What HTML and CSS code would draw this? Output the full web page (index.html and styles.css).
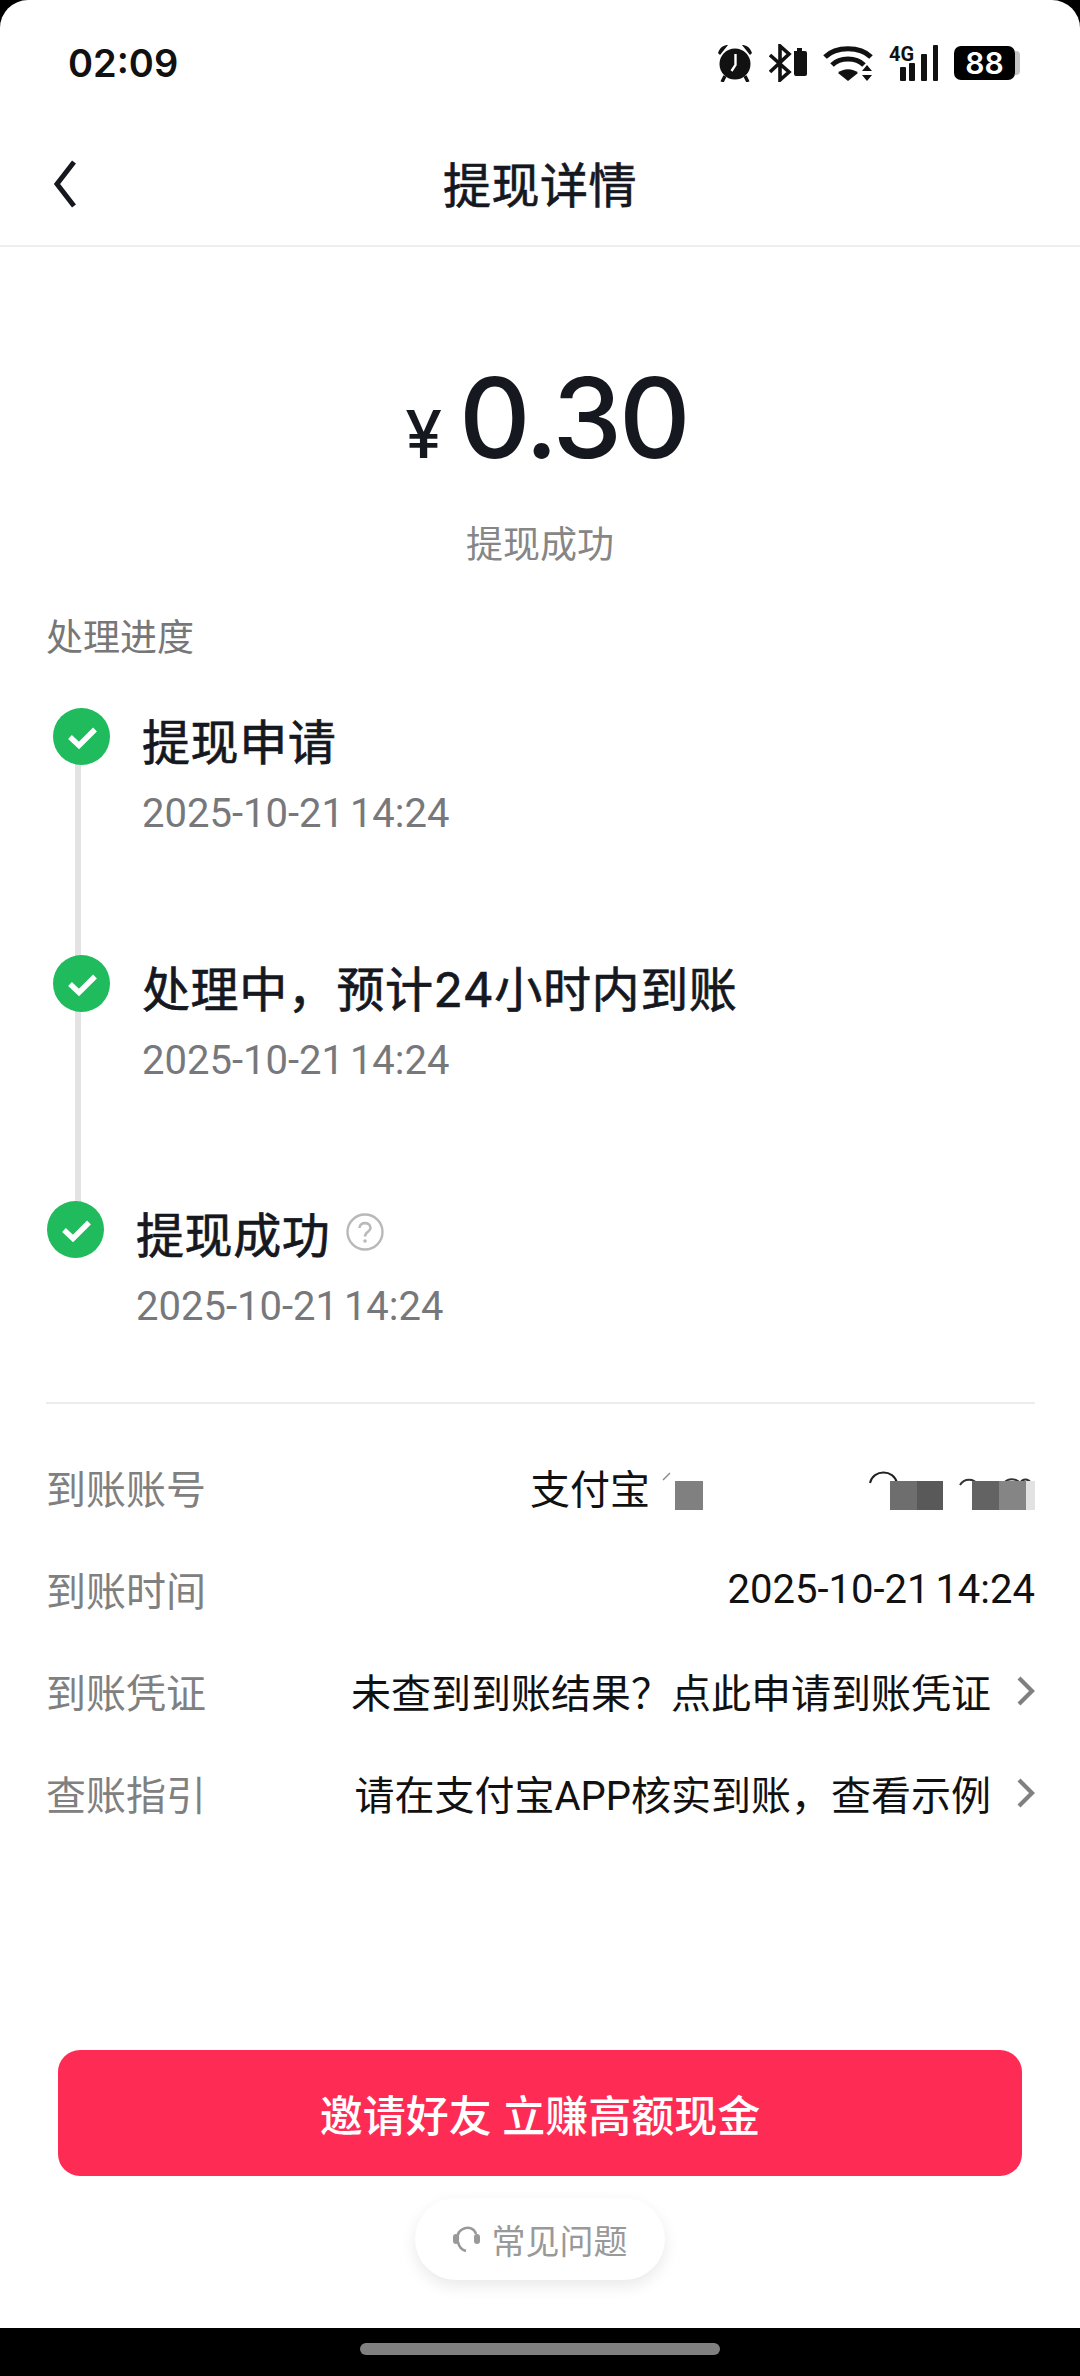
FILE: index.html
```html
<!DOCTYPE html>
<html lang="zh-CN">
<head>
    <meta charset="UTF-8">
    <meta name="viewport" content="width=device-width, initial-scale=1.0">
    <title>提现详情</title>
    <link rel="stylesheet" href="styles.css">
</head>
<body>
    <div class="screen">
        <!-- 状态栏 -->
        <div class="status-bar">
            <span class="status-time">02:09</span>
            <div class="status-icons">
                <svg width="36" height="38" viewBox="0 0 36 38">
                    <circle cx="18" cy="20" r="15.5"/>
                    <path d="M1 9 C3 3 7 1 11 1 L3 11 Z M35 9 C33 3 29 1 25 1 L33 11 Z"/>
                    <path d="M8 32 L5 38 M28 32 L31 38" stroke="#111" stroke-width="3.4" fill="none"/>
                    <path d="M18.5 10 V21 L14.5 27" stroke="#fff" stroke-width="2.4" fill="none"/>
                </svg>
                <svg width="38" height="38" viewBox="0 0 38 38">
                    <path d="M1 11 L20 28 L11 36 V2 L20 10 L1 28" stroke="#111" stroke-width="3.6" fill="none"/>
                    <path d="M25 7 H28 V4 H33 V7 H36 Q38 7 38 9 V30 Q38 32 36 32 H27 Q25 32 25 30 Z"/>
                </svg>
                <svg width="50" height="38" viewBox="0 0 50 38">
                    <path d="M2 13 C13 2 37 2 48 13" stroke="#111" stroke-width="5" fill="none"/>
                    <path d="M9 21 C17 13 33 13 41 21" stroke="#111" stroke-width="5" fill="none"/>
                    <path d="M15 29 C20 24 30 24 35 29 L25 37 Z"/>
                    <path d="M39 27 L44 21 L49 27 Z M39 31 H49 L44 37 Z"/>
                </svg>
                <svg class="icon-signal" width="49" height="46" viewBox="0 -4 49 46">
                    <text x="0" y="17" class="net-text">4G</text>
                    <rect x="11" y="23" width="6" height="14" rx="1"/>
                    <rect x="20" y="19" width="6" height="18" rx="1"/>
                    <rect x="32" y="10" width="6" height="27" rx="1"/>
                    <rect x="44" y="1" width="5" height="36" rx="1"/>
                </svg>
                <div class="battery">
                    <span class="battery-level">88</span>
                    <span class="battery-cap"></span>
                </div>
            </div>
        </div>

        <!-- 标题栏 -->
        <div class="nav-bar">
            <svg class="nav-back" width="34" height="50" viewBox="0 0 34 50">
                <path d="M27 3 L10 25 L27 47" stroke="#16181f" stroke-width="5" fill="none"/>
            </svg>
            <span class="nav-title">提现详情</span>
        </div>

        <!-- 金额 -->
        <div class="amount-box">
            <div class="amount"><span class="amount-unit">¥</span><span class="amount-num">0.30</span></div>
            <p class="amount-status">提现成功</p>
        </div>

        <p class="section-title">处理进度</p>

        <div class="steps">
            <div class="step">
                <div class="step-icon">
                    <svg width="57" height="57" viewBox="0 0 57 57"><circle cx="28.5" cy="28.5" r="28.5" fill="#1fbb5c"/><path d="M17 29 L26 37.5 L42 21.5" stroke="#fff" stroke-width="5.4" fill="none"/></svg>
                </div>
                <div class="step-text">
                    <p class="step-title">提现申请</p>
                    <p class="step-time">2025-10-21 14:24</p>
                </div>
            </div>
            <div class="step">
                <div class="step-icon">
                    <svg width="57" height="57" viewBox="0 0 57 57"><circle cx="28.5" cy="28.5" r="28.5" fill="#1fbb5c"/><path d="M17 29 L26 37.5 L42 21.5" stroke="#fff" stroke-width="5.4" fill="none"/></svg>
                </div>
                <div class="step-text">
                    <p class="step-title">处理中，预计24小时内到账</p>
                    <p class="step-time">2025-10-21 14:24</p>
                </div>
            </div>
            <div class="step step-last">
                <div class="step-icon">
                    <svg width="57" height="57" viewBox="0 0 57 57"><circle cx="28.5" cy="28.5" r="28.5" fill="#1fbb5c"/><path d="M17 29 L26 37.5 L42 21.5" stroke="#fff" stroke-width="5.4" fill="none"/></svg>
                </div>
                <div class="step-text">
                    <p class="step-title">提现成功
                        <svg class="help-icon" width="38" height="38" viewBox="0 0 38 38">
                            <circle cx="19" cy="19" r="17.5" stroke="#b9b9b9" stroke-width="2.4" fill="none"/>
                            <path d="M13.5 15 C13.5 8.5 24.5 8.5 24.5 15 C24.5 19 19 18.5 19 23.5" stroke="#b9b9b9" stroke-width="2.6" fill="none"/>
                            <circle cx="19" cy="28" r="1.8" fill="#b9b9b9"/>
                        </svg>
                    </p>
                    <p class="step-time">2025-10-21 14:24</p>
                </div>
            </div>
        </div>

        <!-- 到账信息 -->
        <div class="info-list">
            <div class="info-row">
                <span class="info-label">到账账号</span>
                <div class="info-value">
                    <span>支付宝</span>
                    <svg class="mask-scrap" width="385" height="48" viewBox="2 0 385 48">
                        <path d="M15 17 L22 10" stroke="#8a8a8a" stroke-width="1.5" fill="none"/>
                        <path d="M222 20 C225 6 246 6 249 20" stroke="#222" stroke-width="2" fill="none"/>
                        <path d="M312 22 C316 15 326 15 330 22 M356 20 C360 15 368 15 372 20 C375 15 381 15 384 22" stroke="#333" stroke-width="2" fill="none"/>
                        <rect x="27" y="18" width="28" height="29" fill="#808080"/>
                        <rect x="242" y="18" width="27" height="29" fill="#6e6e6e"/>
                        <rect x="269" y="18" width="26" height="29" fill="#595959"/>
                        <rect x="324" y="18" width="27" height="29" fill="#636363"/>
                        <rect x="351" y="18" width="27" height="29" fill="#858585"/>
                        <rect x="378" y="18" width="9" height="29" fill="#e2e2e2"/>
                    </svg>
                </div>
            </div>
            <div class="info-row">
                <span class="info-label">到账时间</span>
                <div class="info-value info-date">2025-10-21 14:24</div>
            </div>
            <div class="info-row">
                <span class="info-label">到账凭证</span>
                <div class="info-value">未查到到账结果？点此申请到账凭证
                    <svg class="row-arrow" width="18" height="30" viewBox="0 0 18 30"><path d="M2 2 L15 15 L2 28" stroke="#808080" stroke-width="4.2" fill="none"/></svg>
                </div>
            </div>
            <div class="info-row">
                <span class="info-label">查账指引</span>
                <div class="info-value">请在支付宝APP核实到账，查看示例
                    <svg class="row-arrow" width="18" height="30" viewBox="0 0 18 30"><path d="M2 2 L15 15 L2 28" stroke="#808080" stroke-width="4.2" fill="none"/></svg>
                </div>
            </div>
        </div>

        <div class="bottom-area">
            <button class="invite-btn">邀请好友 立赚高额现金</button>
            <div class="faq-pill">
                <svg width="27" height="30" viewBox="0 0 27 30">
                    <path d="M5 15 C2 4 20 -1 23 10 M5 18 C6 23 9 26 13 27" stroke="#999" stroke-width="2.6" fill="none"/>
                    <rect x="0" y="10" width="6" height="10" rx="3" fill="#999"/>
                    <rect x="21" y="10" width="6" height="10" rx="3" fill="#999"/>
                </svg>
                <span>常见问题</span>
            </div>
        </div>

        <!-- 系统导航条 -->
        <div class="home-bar"><span class="home-handle"></span></div>
    </div>
</body>
</html>
```
FILE: styles.css
```css
* {
    box-sizing: border-box;
}

body {
    margin: 0;
    padding: 0;
    background-color: #000;
    font-family: "Roboto", "Noto Sans CJK SC", sans-serif;
    color: #16181f;
}

p {
    margin: 0;
}

.screen {
    width: 1080px;
    height: 2376px;
    display: flex;
    flex-direction: column;
    background-color: #fff;
    border-radius: 28px 28px 0 0;
    overflow: hidden;
}

/* 状态栏 */
.status-bar {
    height: 123px;
    flex: none;
    display: flex;
    align-items: center;
    justify-content: space-between;
    padding: 3px 60px 0 68px;
}

.status-time {
    font-family: "Inter", sans-serif;
    font-size: 38px;
    font-weight: 600;
    color: #111;
}

.status-icons {
    display: flex;
    align-items: center;
    gap: 16px;
}

.status-icons svg {
    display: block;
    fill: #111;
}

.net-text {
    font-family: "Roboto", sans-serif;
    font-size: 20px;
    font-weight: 700;
}

.battery {
    display: flex;
    align-items: center;
}

.battery-level {
    width: 61px;
    height: 34px;
    background-color: #000;
    border-radius: 7px;
    color: #fff;
    font-family: "Inter", sans-serif;
    font-size: 30px;
    font-weight: 600;
    line-height: 34px;
    text-align: center;
}

.battery-cap {
    width: 5px;
    height: 24px;
    background-color: #c4c4c4;
    border-radius: 0 4px 4px 0;
}

/* 标题栏 */
.nav-bar {
    height: 124px;
    flex: none;
    display: flex;
    align-items: center;
    justify-content: center;
    position: relative;
    padding-bottom: 4px;
    border-bottom: 2px solid #eeeeee;
}

.nav-back {
    position: absolute;
    left: 47px;
    top: 36px;
}

.nav-title {
    font-size: 48px;
    letter-spacing: 0.5px;
    -webkit-text-stroke: 0.7px #16181f;
}

/* 金额 */
.amount-box {
    display: flex;
    flex-direction: column;
    align-items: center;
    padding-top: 111px;
}

.amount {
    display: flex;
    align-items: baseline;
    height: 120px;
    line-height: 120px;
    gap: 17px;
    padding-left: 13px;
    font-family: "Inter", sans-serif;
}

.amount-unit {
    font-size: 66px;
    font-weight: 500;
}

.amount-num {
    font-size: 111px;
    font-weight: 500;
    letter-spacing: -3px;
}

.amount-status {
    margin-top: 41px;
    font-size: 37px;
    line-height: 54px;
    color: #868686;
}

.section-title {
    margin-top: 39px;
    padding-left: 46px;
    font-size: 37px;
    line-height: 54px;
    color: #777;
}

/* 处理进度 */
.steps {
    margin-top: 42px;
    padding-left: 53px;
}

.step {
    display: flex;
    height: 247px;
    position: relative;
}

/* 竖线 */
.step::before {
    content: "";
    position: absolute;
    left: 22px;
    top: 50px;
    width: 6px;
    height: 200px;
    background-color: #e3e3e3;
}

.step-last {
    height: 201px;
    margin-left: -6px;
    margin-top: -1px;
}

.step-last::before {
    display: none;
}

.step-icon {
    width: 57px;
    height: 57px;
    flex: none;
    position: relative;
}

.step-icon svg {
    display: block;
}

.step-text {
    margin-left: 32px;
}

.step-title {
    display: flex;
    align-items: center;
    gap: 16px;
    height: 70px;
    font-family: "Inter", "Noto Sans CJK SC", sans-serif;
    font-size: 48px;
    line-height: 70px;
    letter-spacing: 0.6px;
    -webkit-text-stroke: 0.7px #16181f;
}

.step-time {
    margin-top: 6px;
    font-size: 40px;
    line-height: 60px;
    word-spacing: -4px;
    color: #77787c;
}

.help-icon {
    display: block;
    margin-top: -8px;
}

/* 到账信息 */
.info-list {
    margin: 0 45px 0 46px;
    padding-top: 32px;
    border-top: 2px solid #ececec;
}

.info-row {
    height: 102px;
    display: flex;
    align-items: center;
    justify-content: space-between;
    font-size: 40px;
}

.info-label {
    color: #808080;
}

.info-value {
    display: flex;
    align-items: center;
    color: #111;
}

.info-date {
    word-spacing: -4px;
}

.mask-scrap {
    display: block;
}

.row-arrow {
    margin-left: 26px;
}

/* 底部按钮 */
.bottom-area {
    flex: 1;
    display: flex;
    flex-direction: column;
    align-items: center;
    justify-content: flex-end;
}

.invite-btn {
    width: 964px;
    height: 126px;
    border: none;
    border-radius: 22px;
    background-color: #fe2c55;
    color: #fff;
    font-family: inherit;
    font-size: 43px;
    font-weight: 500;
}

.faq-pill {
    width: 250px;
    height: 82px;
    margin: 22px 0 48px;
    display: flex;
    align-items: center;
    justify-content: center;
    gap: 12px;
    border-radius: 41px;
    background-color: #fff;
    box-shadow: 0 6px 16px rgba(0, 0, 0, 0.09);
    font-size: 34px;
    color: #999;
}

/* 系统导航条 */
.home-bar {
    height: 48px;
    flex: none;
    display: flex;
    justify-content: center;
    padding-top: 15px;
    background-color: #000;
}

.home-handle {
    width: 360px;
    height: 12px;
    border-radius: 6px;
    background-color: #808080;
}
```
